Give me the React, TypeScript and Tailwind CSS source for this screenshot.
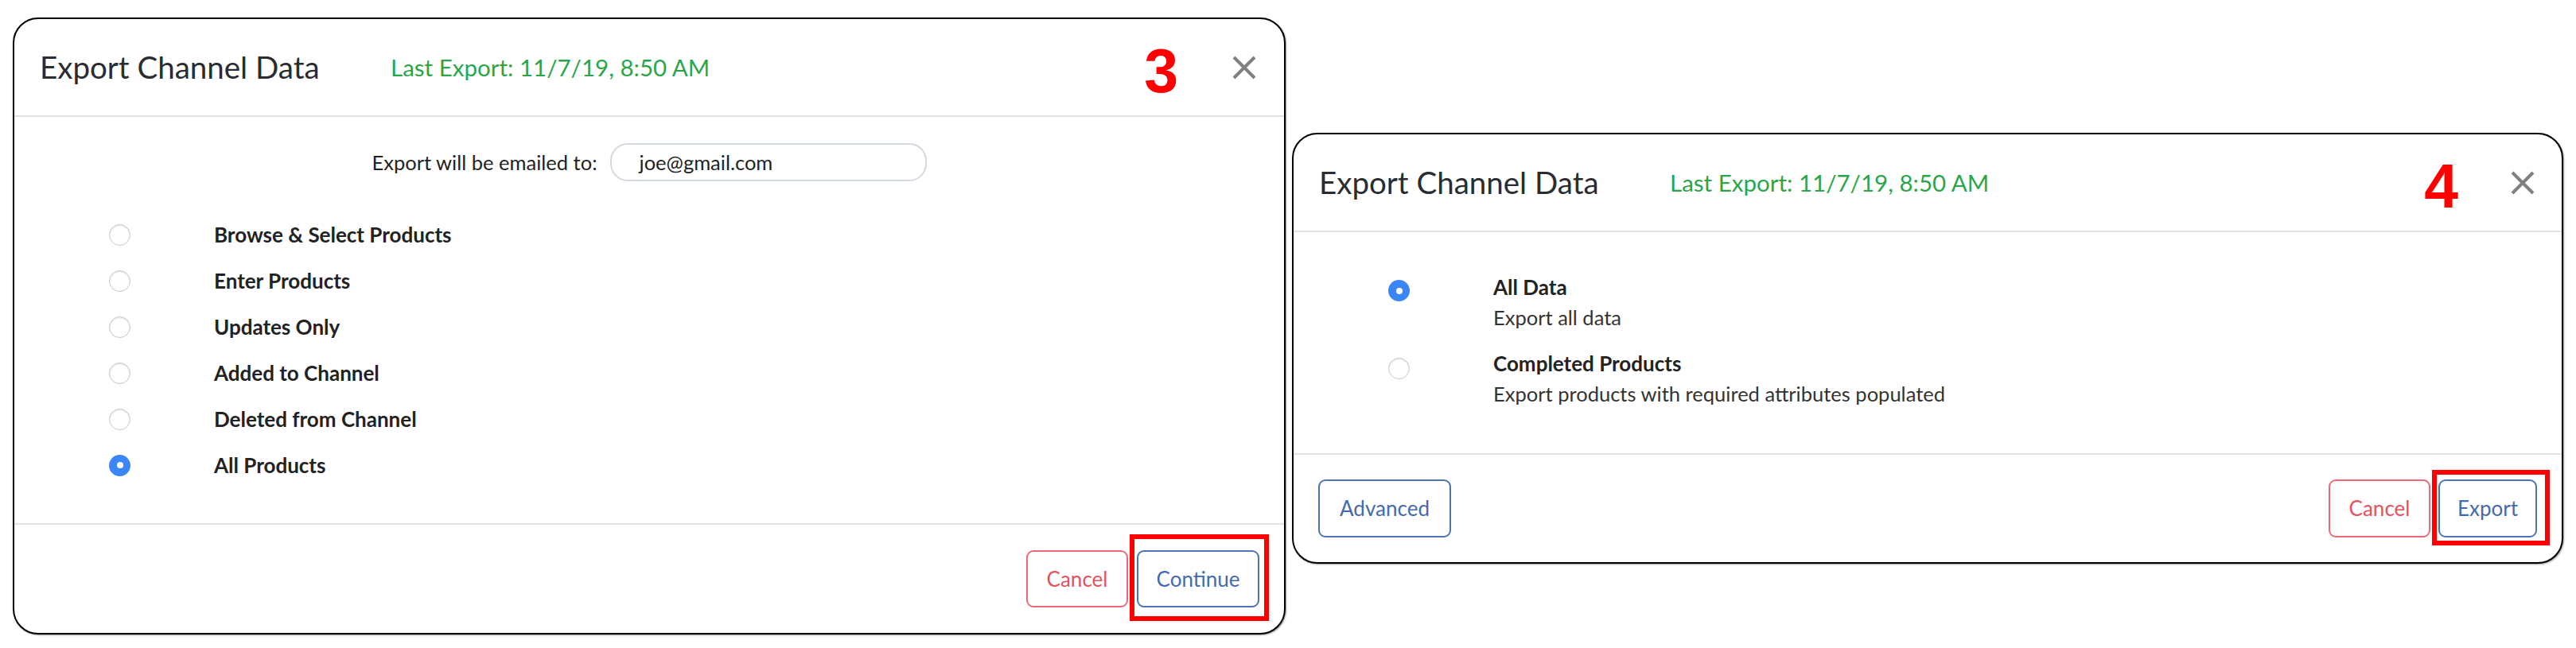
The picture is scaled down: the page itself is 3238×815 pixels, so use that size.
import type React from "react"

const font = { fontFamily: "Lato, 'Open Sans', sans-serif" }

const CloseIcon: React.FC = () => (
  <svg width="30" height="30" viewBox="0 0 30 30" className="shrink-0">
    <path d="M2 2 L28 28 M28 2 L2 28" stroke="#808080" strokeWidth="4" strokeLinecap="butt" />
  </svg>
)

const Radio: React.FC<{ checked?: boolean }> = ({ checked }) =>
  checked ? (
    <div className="w-[27px] h-[27px] rounded-full bg-[#3b86f7] flex items-center justify-center shrink-0">
      <div className="w-[8px] h-[8px] rounded-full bg-white" />
    </div>
  ) : (
    <div className="w-[27px] h-[27px] rounded-full border-[1.5px] border-[#c6c6c6] bg-white shadow-[inset_0_1px_2px_rgba(0,0,0,0.12)] shrink-0" />
  )

const Header: React.FC<{ step: string; gap: string; pr: string }> = ({ step, gap, pr }) => (
  <div className={`h-[123px] shrink-0 border-b-2 border-[#dfe3e8] flex items-center pl-[32px] ${pr}`}>
    <h2 className="w-[441px] text-[38.5px] text-[#2a2c30] leading-none">Export Channel Data</h2>
    <span className="text-[29.5px] text-[#2aa64a] leading-none">Last Export: 11/7/19, 8:50 AM</span>
    <div className={`ml-auto flex items-center ${gap}`}>
      <span
        className="text-[77px] font-black text-[#ff0000] leading-none mt-[10px]"
        style={{ fontFamily: "'Liberation Sans', Arial, sans-serif" }}
      >
        {step}
      </span>
      <CloseIcon />
    </div>
  </div>
)

const exportOptions = [
  "Browse & Select Products",
  "Enter Products",
  "Updates Only",
  "Added to Channel",
  "Deleted from Channel",
  "All Products",
]

export default function App() {
  return (
    <div className="w-[3238px] h-[815px] bg-white flex items-start pl-[16px] gap-[8px]" style={font}>
      {/* Step 3 */}
      <div className="mt-[22px] w-[1600px] h-[776px] border-2 border-black rounded-[32px] bg-white flex flex-col overflow-hidden shadow-[1px_1px_2px_rgba(0,0,0,0.4)]">
        <Header step="3" gap="gap-[68px]" pr="pr-[35px]" />

        <div className="flex-1 flex flex-col">
          <div className="pt-[33px] flex items-center justify-center gap-[16px]">
            <span className="text-[25.5px] text-[#222]">Export will be emailed to:</span>
            <div className="w-[398px] h-[48px] rounded-[22px] border-2 border-[#d3d9e0] flex items-center pl-[35px] text-[25.5px] text-[#222]">
              joe@gmail.com
            </div>
          </div>

          <div className="mt-[38px] pl-[119px] flex flex-col">
            {exportOptions.map((label, i) => (
              <div key={label} className="h-[58px] flex items-center">
                <Radio checked={i === exportOptions.length - 1} />
                <span className="ml-[105px] text-[26px] font-bold text-[#222]">{label}</span>
              </div>
            ))}
          </div>
        </div>

        <div className="h-[138px] shrink-0 border-t-2 border-[#dfe3e8] flex items-center justify-end gap-[11px] pr-[31px]">
          <button className="w-[128px] h-[72px] rounded-[9px] border-2 border-[#ec6a75] text-[26px] text-[#e4525f]">
            Cancel
          </button>
          <div className="relative">
            <button className="w-[154px] h-[72px] rounded-[9px] border-2 border-[#4f72b3] text-[26px] text-[#456aad]">
              Continue
            </button>
            <div className="absolute left-[-9px] right-[-12px] top-[-20px] bottom-[-17px] border-[6px] border-[#ff0000] pointer-events-none" />
          </div>
        </div>
      </div>

      {/* Step 4 */}
      <div className="mt-[167px] w-[1598px] h-[542px] border-2 border-black rounded-[32px] bg-white flex flex-col overflow-hidden shadow-[1px_1px_2px_rgba(0,0,0,0.4)]">
        <Header step="4" gap="gap-[66px]" pr="pr-[34px]" />

        <div className="flex-1 pt-[50px] pl-[119px] flex flex-col gap-[20px]">
          <div className="flex items-start">
            <div className="mt-[10px]">
              <Radio checked />
            </div>
            <div className="ml-[105px] flex flex-col">
              <span className="text-[26px] font-bold text-[#222] leading-[38px]">All Data</span>
              <span className="text-[25.5px] text-[#333] leading-[38px]">Export all data</span>
            </div>
          </div>
          <div className="flex items-start">
            <div className="mt-[12px]">
              <Radio />
            </div>
            <div className="ml-[105px] flex flex-col">
              <span className="text-[26px] font-bold text-[#222] leading-[38px]">Completed Products</span>
              <span className="text-[25.5px] text-[#333] leading-[38px]">
                Export products with required attributes populated
              </span>
            </div>
          </div>
        </div>

        <div className="h-[137px] shrink-0 border-t-2 border-[#dfe3e8] flex items-center pl-[31px] pr-[31px]">
          <button className="w-[167px] h-[73px] rounded-[9px] border-2 border-[#4f72b3] text-[26px] text-[#456aad]">
            Advanced
          </button>
          <div className="ml-auto flex items-center gap-[10px]">
            <button className="w-[128px] h-[73px] rounded-[9px] border-2 border-[#ec6a75] text-[26px] text-[#e4525f]">
              Cancel
            </button>
            <div className="relative">
              <button className="w-[124px] h-[73px] rounded-[9px] border-2 border-[#4f72b3] text-[26px] text-[#456aad]">
                Export
              </button>
              <div className="absolute left-[-8px] right-[-16px] top-[-12px] bottom-[-10px] border-[6px] border-[#ff0000] pointer-events-none" />
            </div>
          </div>
        </div>
      </div>
    </div>
  )
}
